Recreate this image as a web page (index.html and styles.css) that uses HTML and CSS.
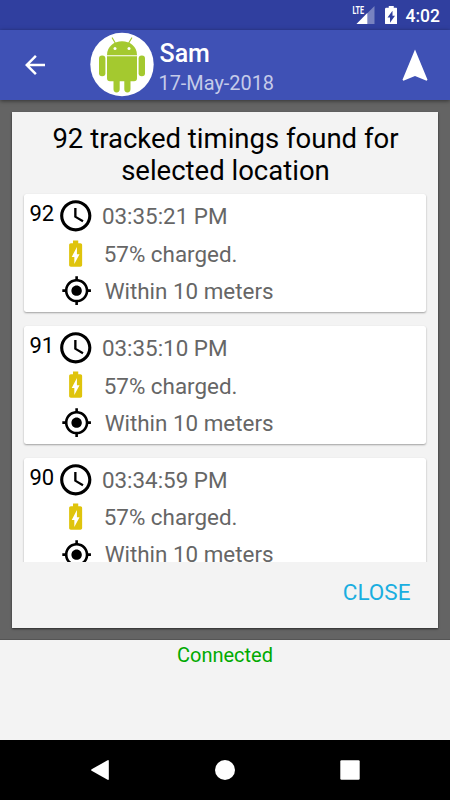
FILE: index.html
```html
<!DOCTYPE html>
<html lang="en">
<head>
  <meta charset="UTF-8">
  <meta name="viewport" content="width=device-width, initial-scale=1.0">
  <title>Sam - 17-May-2018</title>
  <link rel="stylesheet" href="styles.css">
</head>
<body>
  <!-- Shared icons -->
  <svg class="sprite">
    <symbol id="clock" viewBox="0 0 24 24">
      <path d="M11.99 2C6.47 2 2 6.48 2 12s4.47 10 9.99 10C17.52 22 22 17.52 22 12S17.52 2 11.99 2zM12 20c-4.42 0-8-3.58-8-8s3.58-8 8-8 8 3.58 8 8-3.58 8-8 8z"/>
      <path d="M12.5 7H11v6l5.25 3.15.75-1.23-4.5-2.67z"/>
    </symbol>
    <symbol id="battery" viewBox="0 0 24 24">
      <path d="M15.67 4H14V2h-4v2H8.33C7.6 4 7 4.6 7 5.33v15.33C7 21.4 7.6 22 8.33 22h7.33c.74 0 1.34-.6 1.34-1.33V5.33C17 4.6 16.4 4 15.67 4zM11 20v-5.5H9L13 7v5.5h2L11 20z"/>
    </symbol>
    <symbol id="gps" viewBox="0 0 24 24">
      <path d="M12 8c-2.21 0-4 1.79-4 4s1.79 4 4 4 4-1.79 4-4-1.79-4-4-4zm8.94 3c-.46-4.17-3.77-7.48-7.94-7.94V1h-2v2.06C6.83 3.52 3.52 6.83 3.06 11H1v2h2.06c.46 4.17 3.77 7.48 7.94 7.94V23h2v-2.06c4.17-.46 7.48-3.77 7.94-7.94H23v-2h-2.06zM12 19c-3.87 0-7-3.13-7-7s3.13-7 7-7 7 3.13 7 7-3.13 7-7 7z"/>
    </symbol>
  </svg>

  <div class="status-bar">
    <svg class="signal" viewBox="0 0 24 24">
      <path class="signal-off" d="M22.500 3v18H4.500z"/>
      <path d="M15.300 10v11H4.500z"/>
      <text class="lte" x="0.500" y="11" textLength="11.5" lengthAdjust="spacingAndGlyphs">LTE</text>
    </svg>
    <svg class="status-battery" viewBox="7 2 10 20" preserveAspectRatio="none"><use href="#battery" width="24" height="24"/></svg>
    <span class="time">4:02</span>
  </div>

  <header class="toolbar">
    <svg class="back" viewBox="0 0 24 24"><path d="M20 11H7.83l5.59-5.59L12 4l-8 8 8 8 1.41-1.41L7.83 13H20v-2z"/></svg>
    <svg class="avatar" viewBox="0 0 64 66">
      <circle class="avatar-bg" cx="32" cy="32.500" r="31.7"/>
      <g class="robot">
        <path d="M17 23.300C17 14.500 24 9.300 32 9.300S47 14.500 47 23.300z"/>
        <path class="antenna" d="M22.300 6l3.400 5.800M41.700 6l-3.400 5.800"/>
        <path d="M17 24.300h30v22a3 3 0 0 1-3 3h-3.500v8a3 3 0 0 1-6.200 0v-8h-4.600v8a3 3 0 0 1-6.200 0v-8H20a3 3 0 0 1-3-3z"/>
        <rect x="9" y="23.500" width="6.400" height="20.700" rx="3"/>
        <rect x="48.600" y="23.500" width="6.400" height="20.700" rx="3"/>
      </g>
      <circle class="eye" cx="25" cy="16.500" r="1.500"/>
      <circle class="eye" cx="39" cy="16.500" r="1.500"/>
    </svg>
    <div class="person">
      <div class="name">Sam</div>
      <div class="date">17-May-2018</div>
    </div>
    <svg class="navigate" viewBox="0 0 26 32"><path d="M13 0.500L0.500 30.800l.9.900L13 27l11.600 4.700.9-.9z"/></svg>
  </header>

  <main class="map">
    <section class="dialog">
      <h1>92 tracked timings found for<br>selected location</h1>
      <div class="timings">
        <div class="card">
          <span class="number">92</span>
          <div class="rows">
            <div class="row"><svg class="icon clock"><use href="#clock"/></svg><span class="at">03:35:21 PM</span></div>
            <div class="row"><svg class="icon battery"><use href="#battery"/></svg><span class="charge">57% charged.</span></div>
            <div class="row"><svg class="icon gps"><use href="#gps"/></svg><span class="range">Within 10 meters</span></div>
          </div>
        </div>
        <div class="card">
          <span class="number">91</span>
          <div class="rows">
            <div class="row"><svg class="icon clock"><use href="#clock"/></svg><span class="at">03:35:10 PM</span></div>
            <div class="row"><svg class="icon battery"><use href="#battery"/></svg><span class="charge">57% charged.</span></div>
            <div class="row"><svg class="icon gps"><use href="#gps"/></svg><span class="range">Within 10 meters</span></div>
          </div>
        </div>
        <div class="card">
          <span class="number">90</span>
          <div class="rows">
            <div class="row"><svg class="icon clock"><use href="#clock"/></svg><span class="at">03:34:59 PM</span></div>
            <div class="row"><svg class="icon battery"><use href="#battery"/></svg><span class="charge">57% charged.</span></div>
            <div class="row"><svg class="icon gps"><use href="#gps"/></svg><span class="range">Within 10 meters</span></div>
          </div>
        </div>
      </div>
      <button class="close">CLOSE</button>
    </section>
  </main>

  <footer class="connection">Connected</footer>

  <nav class="nav-bar">
    <svg viewBox="0 0 20 20"><path d="M17.600 0.300q1.200-.6 1.200.8v17.800q0 1.400-1.200.8L1.600 10.800q-1-.8 0-1.600z"/></svg>
    <svg viewBox="0 0 20 20"><circle cx="10" cy="10" r="10"/></svg>
    <svg viewBox="0 0 20 20"><rect x="0.300" y="0.300" width="19.400" height="19.400" rx="1.200"/></svg>
  </nav>
</body>
</html>
```
FILE: styles.css
```css
* {
  box-sizing: border-box;
}
body {
  margin: 0;
  width: 450px;
  height: 800px;
  display: flex;
  flex-direction: column;
  overflow: hidden;
  background: #f3f3f3;
  font-family: Roboto, sans-serif;
}
svg {
  display: block;
  flex: none;
  fill: currentColor;
}
.sprite {
  display: none;
}

/* Status bar */
.status-bar {
  height: 30px;
  flex: none;
  display: flex;
  align-items: center;
  justify-content: flex-end;
  padding-right: 10px;
  background: #303f9f;
  color: #fff;
}
.signal {
  width: 24px;
  height: 24px;
  margin-right: 9px;
  overflow: visible;
}
.signal-off {
  opacity: 0.35;
}
.lte {
  font-size: 11px;
  font-weight: 700;
}
.status-battery {
  width: 12.500px;
  height: 18.500px;
  margin-right: 8.500px;
}
.time {
  padding-top: 1px;
  font-size: 17.500px;
  font-weight: 500;
  line-height: 30px;
}

/* Toolbar */
.toolbar {
  height: 70px;
  flex: none;
  display: flex;
  align-items: center;
  padding: 0 22px 0 20px;
  background: #3f51b5;
  color: #fff;
  box-shadow: 0 1px 4px rgba(0, 0, 0, 0.5);
  z-index: 1;
}
.back {
  width: 30px;
  height: 30px;
}
.avatar {
  width: 64px;
  height: 66px;
  margin-left: 39.500px;
}
.avatar-bg,
.eye {
  fill: #fff;
}
.robot {
  fill: #a4c92f;
}
.antenna {
  stroke: #a4c92f;
  stroke-width: 1.200;
  stroke-linecap: round;
}
.person {
  flex: 1;
  padding: 8px 0 0 5px;
}
.name {
  padding-left: 1px;
  font-size: 25px;
  font-weight: 500;
  line-height: 30px;
}
.date {
  font-size: 19.900px;
  line-height: 30px;
  color: #c5cbe9;
}
.navigate {
  width: 26px;
  height: 32px;
  margin-top: -1px;
}

/* Dimmed map with the dialog on it */
.map {
  height: 540px;
  flex: none;
  padding: 12px 12.500px 12px 12.400px;
  background: #646464;
  border-bottom: 1px solid #555;
}
.dialog {
  height: 516px;
  display: flex;
  flex-direction: column;
  padding: 11px 12px 0;
  background: #f3f3f3;
  box-shadow: 0 1px 2px rgba(0, 0, 0, 0.6);
}
h1 {
  margin: 0;
  padding-left: 1px;
  font-size: 27.500px;
  font-weight: 400;
  line-height: 32px;
  text-align: center;
  white-space: nowrap;
}
.timings {
  height: 375px;
  margin: 0 -4px;
  padding: 7px 4px 0;
  flex: none;
  overflow: hidden;
}
.card {
  height: 118px;
  display: flex;
  margin-bottom: 13.750px;
  padding-left: 5px;
  background: #fff;
  border-radius: 2.500px;
  box-shadow: 0 1px 2px rgba(0, 0, 0, 0.35);
}
.number {
  width: 26px;
  padding-top: 6px;
  font-size: 22px;
  line-height: 27px;
}
.rows {
  padding-top: 3px;
}
.row {
  height: 37.500px;
  display: flex;
  align-items: center;
  font-size: 22.400px;
  line-height: 28px;
  color: #666;
}
.icon {
  width: 31.250px;
  height: 31.250px;
  margin: 0 12.200px 0 5.800px;
  color: #000;
}
.icon.clock {
  width: 37.500px;
  height: 37.500px;
  margin: 0 7.200px 0 1.800px;
}
.icon.battery {
  margin: 0 12.600px 0 4.500px;
  color: #dfc40c;
}
.at {
  padding-top: 1px;
}
.charge {
  padding-top: 1px;
}
.close {
  align-self: flex-end;
  margin-top: 16px;
  padding: 0 15px;
  border: none;
  background: none;
  color: #1aaee0;
  font: 400 22.500px/28px Roboto, sans-serif;
}

.connection {
  height: 100px;
  flex: none;
  padding-top: 3px;
  font-size: 20px;
  line-height: 24px;
  text-align: center;
  color: #0a0;
}

/* Android navigation buttons */
.nav-bar {
  height: 60px;
  flex: none;
  display: flex;
  align-items: center;
  justify-content: center;
  gap: 105px;
  background: #000;
  color: #fff;
}
.nav-bar svg {
  width: 20px;
  height: 20px;
}
```
